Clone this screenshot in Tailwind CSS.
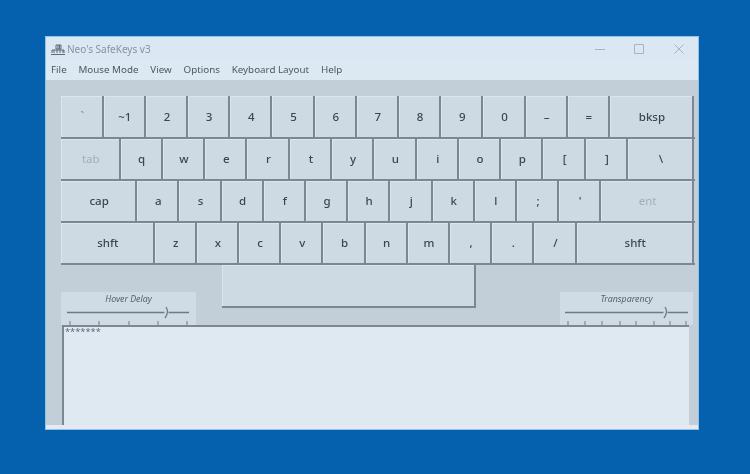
<!DOCTYPE html>
<html><head><meta charset="utf-8">
<script src="https://cdn.jsdelivr.net/npm/@tailwindcss/browser@4"></script>
</head>
<body class="w-[750px] h-[474px] overflow-hidden bg-[#0560ae] pt-[36px] pl-[45px] font-['Noto_Sans',sans-serif]">
<div class="w-[654px] h-[394px] flex flex-col border border-[#8fc3e8] bg-[#dfeaf3] overflow-hidden blur-[0.4px]">
  <!-- title bar -->
  <div class="h-[23px] shrink-0 flex items-center bg-[#dbe8f3] pl-[5px]">
    <svg width="14" height="14" viewBox="0 0 14 14" class="text-[#5d6a76]" fill="none" stroke="currentColor" stroke-width="1">
      <path d="M0 12.500H14M1 11V8H13V11M3 8V11M6 8V11M9 8V11M12 8V11M5 3H10V7H5ZM7 3V7M8.500 3V7"/>
    </svg>
    <span class="ml-[2px] text-[10px] text-[#87929d] leading-none">Neo's SafeKeys v3</span>
    <div class="ml-auto flex items-center gap-[28px] pr-[13px] text-[#a9b4be]">
      <svg width="12" height="10" viewBox="0 0 12 10" fill="none" stroke="currentColor"><path d="M1 5.500H11"/></svg>
      <svg width="11" height="10" viewBox="0 0 11 10" fill="none" stroke="currentColor"><path d="M0.500 0.500H9.500V9.500H0.500Z"/></svg>
      <svg width="12" height="10" viewBox="0 0 12 10" fill="none" stroke="currentColor"><path d="M1.500 0.500L10.500 9.500M10.500 0.500L1.500 9.500"/></svg>
    </div>
  </div>
  <!-- menu -->
  <div class="h-[20px] shrink-0 flex items-center gap-[11.800px] pl-[5px] pt-[1px] text-[9.800px] text-[#4c5863] bg-[#dce8f2]">
    <span>File</span><span>Mouse Mode</span><span>View</span><span>Options</span><span>Keyboard Layout</span><span>Help</span>
  </div>
  <!-- body -->
  <div class="flex-1 min-h-0 flex flex-col bg-[#c3cfd8] pt-[16px] pl-[15px] border-b-[4px] border-[#e6e8f2]">
    <div class="w-[634px] flex flex-col text-[11.500px] font-medium text-[#3a4651]">
      <div class="h-[41px] flex">
        <div class="w-[42.700px] flex items-center justify-center pl-[2px] pb-[2px] bg-[#cedae3] border-r-2 border-[#7b8791] shadow-[inset_1px_1px_0_#dbe5ec] text-[#7b8791]">`</div>
        <div class="w-[42.200px] flex items-center justify-center pl-[2px] bg-[#cedae3] border-r-2 border-[#7b8791] shadow-[inset_1px_1px_0_#dbe5ec]">~1</div>
        <div class="w-[42.200px] flex items-center justify-center pl-[2px] bg-[#cedae3] border-r-2 border-[#7b8791] shadow-[inset_1px_1px_0_#dbe5ec]">2</div>
        <div class="w-[42.200px] flex items-center justify-center pl-[2px] bg-[#cedae3] border-r-2 border-[#7b8791] shadow-[inset_1px_1px_0_#dbe5ec]">3</div>
        <div class="w-[42.200px] flex items-center justify-center pl-[2px] bg-[#cedae3] border-r-2 border-[#7b8791] shadow-[inset_1px_1px_0_#dbe5ec]">4</div>
        <div class="w-[42.200px] flex items-center justify-center pl-[2px] bg-[#cedae3] border-r-2 border-[#7b8791] shadow-[inset_1px_1px_0_#dbe5ec]">5</div>
        <div class="w-[42.200px] flex items-center justify-center pl-[2px] bg-[#cedae3] border-r-2 border-[#7b8791] shadow-[inset_1px_1px_0_#dbe5ec]">6</div>
        <div class="w-[42.200px] flex items-center justify-center pl-[2px] bg-[#cedae3] border-r-2 border-[#7b8791] shadow-[inset_1px_1px_0_#dbe5ec]">7</div>
        <div class="w-[42.200px] flex items-center justify-center pl-[2px] bg-[#cedae3] border-r-2 border-[#7b8791] shadow-[inset_1px_1px_0_#dbe5ec]">8</div>
        <div class="w-[42.200px] flex items-center justify-center pl-[2px] bg-[#cedae3] border-r-2 border-[#7b8791] shadow-[inset_1px_1px_0_#dbe5ec]">9</div>
        <div class="w-[42.200px] flex items-center justify-center pl-[2px] bg-[#cedae3] border-r-2 border-[#7b8791] shadow-[inset_1px_1px_0_#dbe5ec]">0</div>
        <div class="w-[42.200px] flex items-center justify-center pl-[2px] bg-[#cedae3] border-r-2 border-[#7b8791] shadow-[inset_1px_1px_0_#dbe5ec]">–</div>
        <div class="w-[42.200px] flex items-center justify-center pl-[2px] bg-[#cedae3] border-r-2 border-[#7b8791] shadow-[inset_1px_1px_0_#dbe5ec]">=</div>
        <div class="w-[84px] flex items-center justify-center pl-[2px] bg-[#cedae3] border-r-2 border-[#7b8791] shadow-[inset_1px_1px_0_#dbe5ec]">bksp</div>
      </div>
      <div class="h-[42px] flex border-t-2 border-[#7b8791]">
        <div class="w-[59.500px] flex items-center justify-center pl-[2px] bg-[#cedae3] border-r-2 border-[#7b8791] shadow-[inset_1px_1px_0_#dbe5ec] text-[#a3aeb8] font-normal">tab</div>
        <div class="w-[42.300px] flex items-center justify-center pl-[2px] bg-[#cedae3] border-r-2 border-[#7b8791] shadow-[inset_1px_1px_0_#dbe5ec]">q</div>
        <div class="w-[42.300px] flex items-center justify-center pl-[2px] bg-[#cedae3] border-r-2 border-[#7b8791] shadow-[inset_1px_1px_0_#dbe5ec]">w</div>
        <div class="w-[42.300px] flex items-center justify-center pl-[2px] bg-[#cedae3] border-r-2 border-[#7b8791] shadow-[inset_1px_1px_0_#dbe5ec]">e</div>
        <div class="w-[42.300px] flex items-center justify-center pl-[2px] bg-[#cedae3] border-r-2 border-[#7b8791] shadow-[inset_1px_1px_0_#dbe5ec]">r</div>
        <div class="w-[42.300px] flex items-center justify-center pl-[2px] bg-[#cedae3] border-r-2 border-[#7b8791] shadow-[inset_1px_1px_0_#dbe5ec]">t</div>
        <div class="w-[42.300px] flex items-center justify-center pl-[2px] bg-[#cedae3] border-r-2 border-[#7b8791] shadow-[inset_1px_1px_0_#dbe5ec]">y</div>
        <div class="w-[42.300px] flex items-center justify-center pl-[2px] bg-[#cedae3] border-r-2 border-[#7b8791] shadow-[inset_1px_1px_0_#dbe5ec]">u</div>
        <div class="w-[42.300px] flex items-center justify-center pl-[2px] bg-[#cedae3] border-r-2 border-[#7b8791] shadow-[inset_1px_1px_0_#dbe5ec]">i</div>
        <div class="w-[42.300px] flex items-center justify-center pl-[2px] bg-[#cedae3] border-r-2 border-[#7b8791] shadow-[inset_1px_1px_0_#dbe5ec]">o</div>
        <div class="w-[42.300px] flex items-center justify-center pl-[2px] bg-[#cedae3] border-r-2 border-[#7b8791] shadow-[inset_1px_1px_0_#dbe5ec]">p</div>
        <div class="w-[42.300px] flex items-center justify-center pl-[2px] bg-[#cedae3] border-r-2 border-[#7b8791] shadow-[inset_1px_1px_0_#dbe5ec]">[</div>
        <div class="w-[42.300px] flex items-center justify-center pl-[2px] bg-[#cedae3] border-r-2 border-[#7b8791] shadow-[inset_1px_1px_0_#dbe5ec]">]</div>
        <div class="w-[66px] flex items-center justify-center pl-[2px] bg-[#cedae3] border-r-2 border-[#7b8791] shadow-[inset_1px_1px_0_#dbe5ec]">\</div>
      </div>
      <div class="h-[42px] flex border-t-2 border-[#7b8791]">
        <div class="w-[76.200px] flex items-center justify-center pl-[2px] bg-[#cedae3] border-r-2 border-[#7b8791] shadow-[inset_1px_1px_0_#dbe5ec]">cap</div>
        <div class="w-[42.200px] flex items-center justify-center pl-[2px] bg-[#cedae3] border-r-2 border-[#7b8791] shadow-[inset_1px_1px_0_#dbe5ec]">a</div>
        <div class="w-[42.200px] flex items-center justify-center pl-[2px] bg-[#cedae3] border-r-2 border-[#7b8791] shadow-[inset_1px_1px_0_#dbe5ec]">s</div>
        <div class="w-[42.200px] flex items-center justify-center pl-[2px] bg-[#cedae3] border-r-2 border-[#7b8791] shadow-[inset_1px_1px_0_#dbe5ec]">d</div>
        <div class="w-[42.200px] flex items-center justify-center pl-[2px] bg-[#cedae3] border-r-2 border-[#7b8791] shadow-[inset_1px_1px_0_#dbe5ec]">f</div>
        <div class="w-[42.200px] flex items-center justify-center pl-[2px] bg-[#cedae3] border-r-2 border-[#7b8791] shadow-[inset_1px_1px_0_#dbe5ec]">g</div>
        <div class="w-[42.200px] flex items-center justify-center pl-[2px] bg-[#cedae3] border-r-2 border-[#7b8791] shadow-[inset_1px_1px_0_#dbe5ec]">h</div>
        <div class="w-[42.200px] flex items-center justify-center pl-[2px] bg-[#cedae3] border-r-2 border-[#7b8791] shadow-[inset_1px_1px_0_#dbe5ec]">j</div>
        <div class="w-[42.200px] flex items-center justify-center pl-[2px] bg-[#cedae3] border-r-2 border-[#7b8791] shadow-[inset_1px_1px_0_#dbe5ec]">k</div>
        <div class="w-[42.200px] flex items-center justify-center pl-[2px] bg-[#cedae3] border-r-2 border-[#7b8791] shadow-[inset_1px_1px_0_#dbe5ec]">l</div>
        <div class="w-[42.200px] flex items-center justify-center pl-[2px] bg-[#cedae3] border-r-2 border-[#7b8791] shadow-[inset_1px_1px_0_#dbe5ec]">;</div>
        <div class="w-[42.200px] flex items-center justify-center pl-[2px] bg-[#cedae3] border-r-2 border-[#7b8791] shadow-[inset_1px_1px_0_#dbe5ec]">'</div>
        <div class="w-[92.600px] flex items-center justify-center pl-[2px] bg-[#cedae3] border-r-2 border-[#7b8791] shadow-[inset_1px_1px_0_#dbe5ec] text-[#a3aeb8] font-normal">ent</div>
      </div>
      <div class="h-[44px] flex border-y-2 border-[#7b8791]">
        <div class="w-[93.700px] flex items-center justify-center pl-[2px] bg-[#cedae3] border-r-2 border-[#7b8791] shadow-[inset_1px_1px_0_#dbe5ec]">shft</div>
        <div class="w-[42.200px] flex items-center justify-center pl-[2px] bg-[#cedae3] border-r-2 border-[#7b8791] shadow-[inset_1px_1px_0_#dbe5ec]">z</div>
        <div class="w-[42.200px] flex items-center justify-center pl-[2px] bg-[#cedae3] border-r-2 border-[#7b8791] shadow-[inset_1px_1px_0_#dbe5ec]">x</div>
        <div class="w-[42.200px] flex items-center justify-center pl-[2px] bg-[#cedae3] border-r-2 border-[#7b8791] shadow-[inset_1px_1px_0_#dbe5ec]">c</div>
        <div class="w-[42.200px] flex items-center justify-center pl-[2px] bg-[#cedae3] border-r-2 border-[#7b8791] shadow-[inset_1px_1px_0_#dbe5ec]">v</div>
        <div class="w-[42.200px] flex items-center justify-center pl-[2px] bg-[#cedae3] border-r-2 border-[#7b8791] shadow-[inset_1px_1px_0_#dbe5ec]">b</div>
        <div class="w-[42.200px] flex items-center justify-center pl-[2px] bg-[#cedae3] border-r-2 border-[#7b8791] shadow-[inset_1px_1px_0_#dbe5ec]">n</div>
        <div class="w-[42.200px] flex items-center justify-center pl-[2px] bg-[#cedae3] border-r-2 border-[#7b8791] shadow-[inset_1px_1px_0_#dbe5ec]">m</div>
        <div class="w-[42.200px] flex items-center justify-center pl-[2px] bg-[#cedae3] border-r-2 border-[#7b8791] shadow-[inset_1px_1px_0_#dbe5ec]">,</div>
        <div class="w-[42.200px] flex items-center justify-center pl-[2px] bg-[#cedae3] border-r-2 border-[#7b8791] shadow-[inset_1px_1px_0_#dbe5ec]">.</div>
        <div class="w-[42.200px] flex items-center justify-center pl-[2px] bg-[#cedae3] border-r-2 border-[#7b8791] shadow-[inset_1px_1px_0_#dbe5ec]">/</div>
        <div class="w-[117.300px] flex items-center justify-center pl-[2px] bg-[#cedae3] border-r-2 border-[#7b8791] shadow-[inset_1px_1px_0_#dbe5ec]">shft</div>
      </div>
    </div>
    <!-- lower row -->
    <div class="w-[632px] h-[60px] shrink-0 flex relative">
      <div class="ml-[161px] w-[254px] h-[43px] bg-[#cedae3] border-r-2 border-b-2 border-[#7b8791] shadow-[inset_1px_1px_0_#dbe5ec]"></div>
      <div class="absolute left-0 bottom-0 w-[135px] h-[33px] bg-[#d0dce5] flex flex-col items-center">
        <span class="mt-[1px] text-[8.800px] italic text-[#55616c] leading-[12px]">Hover Delay</span>
        <svg width="135" height="20" viewBox="0 0 135 20" fill="none" stroke="#6e7a85">
          <path d="M6 7.500H128" stroke-width="1.500"/>
          <path d="M104 2C106 5 106 9 104 13" stroke="#cfdbe4" stroke-width="4"/>
          <path d="M105 2C107 5 107 9 104 13" stroke-width="1.300"/>
          <path d="M9 16V20M38 16V20M68 16V20M97 16V20M126 16V20"/>
        </svg>
      </div>
      <div class="absolute left-[499px] bottom-0 w-[133px] h-[33px] bg-[#d0dce5] flex flex-col items-center">
        <span class="mt-[1px] text-[8.800px] italic text-[#55616c] leading-[12px]">Transparency</span>
        <svg width="133" height="20" viewBox="0 0 133 20" fill="none" stroke="#6e7a85">
          <path d="M5 7.500H128" stroke-width="1.500"/>
          <path d="M104 2C106 5 106 9 104 13" stroke="#cfdbe4" stroke-width="4"/>
          <path d="M105 2C107 5 107 9 104 13" stroke-width="1.300"/>
          <path d="M8 16V20M25 16V20M42 16V20M60 16V20M76 16V20M94 16V20M110 16V20M126 16V20"/>
        </svg>
      </div>
    </div>
    <!-- text area -->
    <div class="flex-1 min-h-0 ml-[1px] mr-[9px] bg-[#dfe9f1] border-t-2 border-l-2 border-[#7b8791] pl-[1px]">
      <div class="text-[9.300px] leading-[10px] text-[#5d6975]">*******</div>
    </div>
  </div>
</div>
</body></html>
